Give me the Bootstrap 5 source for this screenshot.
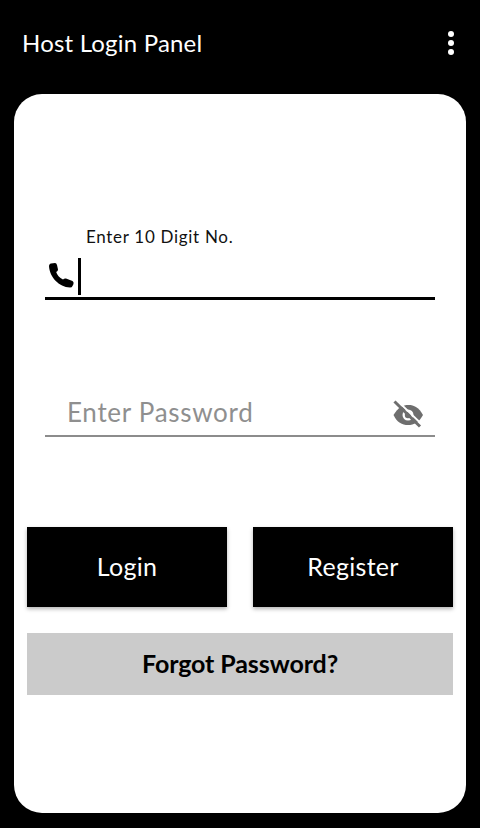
<!DOCTYPE html>
<html lang="en">
<head>
<meta charset="utf-8">
<title>Host Login Panel</title>
<link href="https://cdn.jsdelivr.net/npm/bootstrap@5.3.0/dist/css/bootstrap.min.css" rel="stylesheet">
<style>
html,body{height:828px;overflow:hidden;background:#000;}
body{font-family:"Lato","Noto Sans",sans-serif;}
.topbar{height:94px;padding:0 22px 8px 22px;}
.top-title{font-size:24px;color:#fff;letter-spacing:.2px;line-height:1;}
.dots{width:6px;margin-right:4px;gap:3px;}
.dots i{display:block;width:6px;height:6px;border-radius:50%;background:#fff;}
.sheet{height:719px;margin:0 14px;border-radius:28px;background:#fff;padding:133px 13px 0;border:0;}
.fields{padding:0 18px;}
.float-label{font-size:17px;color:#111;padding-left:41px;line-height:20px;height:20px;letter-spacing:.7px;margin-bottom:0;}
.phone-row{height:53px;border-bottom:3px solid #000;}
.phone-ico{width:32px;height:32px;margin:11px 0 0 0;flex-shrink:0;}
.caret-bar{width:3px;height:37px;background:#000;margin-left:1px;margin-top:11px;flex-shrink:0;}
.pw-row{height:48px;margin-top:89px;border-bottom:2px solid #8c8c8c;padding-left:22px;}
.pw-input{border:0;outline:0;box-shadow:none;background:transparent;padding:0;font-size:26px;letter-spacing:.7px;line-height:1;height:44px;border-radius:0;}
.pw-input::placeholder{color:#8f8f8f;opacity:1;}
.eye-ico{width:34px;height:34px;margin-right:9px;margin-top:4px;}
.act-row{margin-top:90px;gap:26px;}
.act-btn{width:200px;height:80px;border-radius:0;background:#000;color:#fff;border:0;font-size:25px;letter-spacing:.3px;box-shadow:0 2px 4px rgba(0,0,0,.3);padding:0;}
.act-btn:hover{background:#000;color:#fff;}
.forgot-btn{height:62px;width:100%;margin-top:26px;border-radius:0;background:#cbcbcb;color:#000;border:0;font-size:25px;font-weight:700;letter-spacing:-.1px;padding:0;}
.forgot-btn:hover{background:#cbcbcb;color:#000;}
</style>
</head>
<body>
<nav class="navbar topbar d-flex justify-content-between align-items-center">
  <span class="top-title">Host Login Panel</span>
  <span class="dots d-flex flex-column"><i></i><i></i><i></i></span>
</nav>
<main class="card sheet">
  <form class="d-flex flex-column">
    <div class="fields">
      <label class="float-label d-block" for="phone">Enter 10 Digit No.</label>
      <div class="phone-row d-flex align-items-start">
        <svg class="phone-ico" viewBox="0 0 32 32" aria-hidden="true"><path fill="#000" d="M6 5.500 10 5Q11.500 5 12 7L13 11.500Q13 13 11.200 14 12.500 18.500 18 21.500 19.500 20 21 20.500L27.500 23Q29 24 28.500 26L27.500 28Q27 29.500 25 29.500C14 29 4.500 19 4 8 4 6 6 5.500 6 5.500Z"/></svg>
        <span class="caret-bar"></span>
        <input id="phone" class="form-control pw-input" type="tel" aria-label="Enter 10 Digit No.">
      </div>
      <div class="pw-row d-flex align-items-center">
        <input class="form-control pw-input" type="password" placeholder="Enter Password">
        <svg class="eye-ico flex-shrink-0" viewBox="0 0 34 34" aria-hidden="true"><path fill="#6e6e6e" d="M1.500 18C6 10.500 11 8 16.500 8 22 8 27 10.500 31 18 27 25.500 22 28 16 28 10 28 5 25.500 1.500 18Z"/><circle cx="16" cy="18" r="5.500" fill="#fff"/><circle cx="16" cy="18" r="3.200" fill="#6e6e6e"/><path d="M4 2.500 30 27.500" stroke="#fff" stroke-width="1.800"/><path d="M2.500 4.500 28 29.500" stroke="#6e6e6e" stroke-width="3"/></svg>
      </div>
    </div>
    <div class="act-row d-flex">
      <button type="button" class="btn act-btn">Login</button>
      <button type="button" class="btn act-btn">Register</button>
    </div>
    <button type="button" class="btn forgot-btn">Forgot Password?</button>
  </form>
</main>
<script src="https://cdn.jsdelivr.net/npm/bootstrap@5.3.0/dist/js/bootstrap.bundle.min.js"></script>
</body>
</html>
